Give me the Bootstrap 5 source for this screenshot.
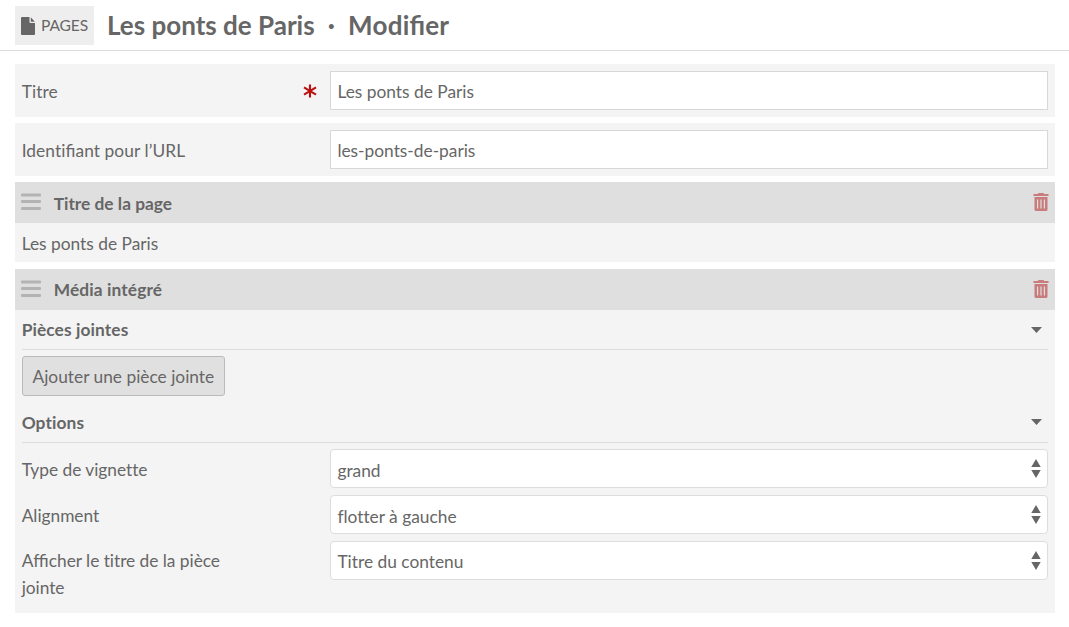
<!DOCTYPE html>
<html lang="fr">
<head>
<meta charset="utf-8">
<meta name="viewport" content="width=device-width, initial-scale=1">
<title>Les ponts de Paris · Modifier</title>
<link href="https://cdn.jsdelivr.net/npm/bootstrap@5.3.0/dist/css/bootstrap.min.css" rel="stylesheet">
<style>
body { font-family: Lato, sans-serif; font-size: 17.33px; line-height: 27px; color: #666; background: #fff; overflow: hidden; font-variant-ligatures: none; }
.lig { font-variant-ligatures: common-ligatures; letter-spacing: 0; }
.topbar { height: 51px; padding: 6px 15px 5px; border-bottom: 1px solid #ddd; }
.pages-link { width: 79px; height: 39px; padding-left: 6px; background: #eee; color: #666; font-size: 15.6px; letter-spacing: -.15px; }
.page-title { font-size: 26px; line-height: 39px; font-weight: 700; margin: 0 0 0 13px; white-space: pre; }
.title-dot { margin: 0 .5px; }
.title-action { letter-spacing: .25px; }
.editor { padding: 13px 14px 0 15px; }
.panel { background: #f4f4f4; padding: 7px 7px 7px 6.67px; }
.panel-row { height: 53px; margin-bottom: 6px; }
.lbl { width: 308.33px; flex: none; }
.panel-row .lbl { padding-top: 1px; letter-spacing: .08px; }
.required-mark { margin-right: 13px; }
.panel .form-control, .panel .form-select { height: 39px; padding: 2px 7px 0 6.4px; border: 1px solid #d8d8d8; border-radius: 0; color: #666; font-size: inherit; line-height: 35px; font-variant-ligatures: inherit; }
.panel .form-select { border-color: #ddd; border-radius: 4px; background: #fff url("data:image/svg+xml,%3Csvg xmlns='http://www.w3.org/2000/svg' width='10' height='20'%3E%3Cpath d='M.3 8 5 0l4.700 8zM.3 11h9.400L5 19z' fill='%23666'/%3E%3C/svg%3E") no-repeat right 6px top 9px / 10px 20px; }
.panel .select-low { padding-top: 4px; line-height: 33px; }
.block-head { height: 41px; padding: 2px 6px 0; background: #dfdfdf; font-weight: 700; }
.block-head svg { margin-bottom: 3px; }
.media-block .block-head { padding-top: 0; letter-spacing: .12px; }
.media-block .block-head svg { margin-bottom: 1px; }
.block-name { margin-left: 12.700px; }
.page-heading { height: 39px; padding-top: 7px; margin-bottom: 7px; }
.media-block .panel { height: 303px; }
.section-head { height: 40px; border-bottom: 1px solid #ddd; font-weight: 700; letter-spacing: .1px; }
.section-head .caret { margin-right: 6px; }
.caret-high { margin-bottom: 2px; }
.add-btn { display: block; height: 40px; width: 203.33px; margin: 6px 0 7px; padding: 2px 0 0; border: 1px solid #bbb; border-radius: 3px; background: #e0e0e0; color: #666; font-size: inherit; line-height: 36px; }
.options { padding-top: 6px; display: grid; gap: 7px; }
.options > div { height: 39px; }
.options .lbl { padding-top: 7px; letter-spacing: -.03px; }
.options > div:last-child .lbl { padding-top: 6px; }
</style>
</head>
<body>
<svg class="d-none" xmlns="http://www.w3.org/2000/svg">
  <symbol id="grip" viewBox="0 0 20 18"><path fill="#b3b3b3" d="M1 .5h18q1 0 1 1v1q0 1-1 1H1q-1 0-1-1v-1q0-1 1-1zM1 7h18q1 0 1 1v1q0 1-1 1H1Q0 10 0 9V8q0-1 1-1zM1 14h18q1 0 1 1v1q0 1-1 1H1q-1 0-1-1v-1q0-1 1-1z"/></symbol>
  <symbol id="trash" viewBox="0 0 16 18"><path fill="#c87c7c" fill-rule="evenodd" d="M5.500 0h5l.7 1H15.500v2H.5V1h4.300zM1.500 4h13v12.500q0 1.500-1.500 1.500H3q-1.500 0-1.500-1.500zM4 6.500v9h1.200v-9zM7.400 6.500v9h1.200v-9zM10.800 6.500v9H12v-9z"/></symbol>
</svg>
<header class="topbar d-flex">
  <a href="#" class="pages-link d-flex align-items-center text-decoration-none">
    <svg width="14" height="18" viewBox="0 0 14 18" fill="#666"><path d="M1 0h7.500v5q0 1 1 1H14v11q0 1-1 1H1q-1 0-1-1V1q0-1 1-1zM9.800.2 13.800 4.700H9.800z"/></svg>
    <span class="ms-auto me-auto">PAGES</span>
  </a>
  <h1 class="page-title">Les ponts de Paris<span class="title-dot">  ·  </span><span class="title-action">Modi<span class="lig">fi</span>er</span></h1>
</header>
<main class="editor">
  <div class="panel panel-row d-flex align-items-center">
    <label class="lbl d-flex align-items-center justify-content-between" for="titre">Titre
      <svg class="required-mark" width="14" height="14" viewBox="0 0 14 14" stroke="#b11" stroke-width="2.100" fill="none"><path d="M7 .5v13M1 3.400l12 7.200M1 10.600l12-7.200"/></svg>
    </label>
    <input id="titre" class="form-control" value="Les ponts de Paris">
  </div>
  <div class="panel panel-row d-flex align-items-center">
    <label class="lbl" for="slug">Identi<span class="lig">fi</span>ant pour l’URL</label>
    <input id="slug" class="form-control" value="les-ponts-de-paris">
  </div>

  <section>
    <div class="block-head d-flex align-items-center">
      <svg width="20" height="18"><use href="#grip"/></svg>
      <span class="block-name">Titre de la page</span>
      <svg class="ms-auto" width="16" height="18"><use href="#trash"/></svg>
    </div>
    <div class="panel page-heading">Les ponts de Paris</div>
  </section>

  <section class="media-block">
    <div class="block-head d-flex align-items-center">
      <svg width="20" height="18"><use href="#grip"/></svg>
      <span class="block-name">Média intégré</span>
      <svg class="ms-auto" width="16" height="18"><use href="#trash"/></svg>
    </div>
    <div class="panel pt-0">
      <div class="section-head d-flex align-items-center justify-content-between">Pièces jointes
        <svg class="caret" width="11" height="6" viewBox="0 0 11 6" fill="#666"><path d="M0 0h11L5.500 6z"/></svg>
      </div>
      <button type="button" class="btn add-btn">Ajouter une pièce jointe</button>
      <div class="section-head d-flex align-items-center justify-content-between">Options
        <svg class="caret caret-high" width="11" height="6" viewBox="0 0 11 6" fill="#666"><path d="M0 0h11L5.500 6z"/></svg>
      </div>
      <div class="options">
        <div class="d-flex"><label class="lbl" for="size">Type de vignette</label>
          <select id="size" class="form-select select-low"><option>grand</option></select></div>
        <div class="d-flex"><label class="lbl" for="align">Alignment</label>
          <select id="align" class="form-select select-low"><option>flotter à gauche</option></select></div>
        <div class="d-flex"><label class="lbl" for="caption">A<span class="lig">ffi</span>cher le titre de la pièce<br>jointe</label>
          <select id="caption" class="form-select"><option>Titre du contenu</option></select></div>
      </div>
    </div>
  </section>
</main>
<script src="https://cdn.jsdelivr.net/npm/bootstrap@5.3.0/dist/js/bootstrap.bundle.min.js"></script>
</body>
</html>
